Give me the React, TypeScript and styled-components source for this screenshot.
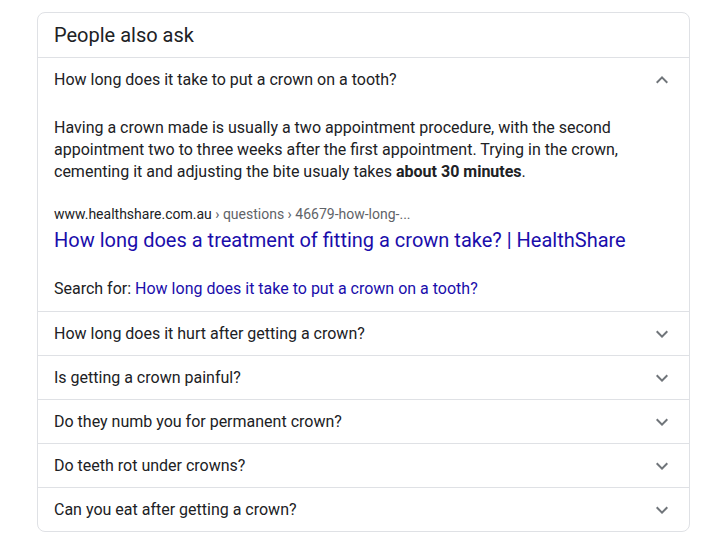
import React from "react";
import styled, { createGlobalStyle } from "styled-components";

const Global = createGlobalStyle`
  html, body { margin: 0; padding: 0; background: #fff; }
  body { font-family: Roboto, "Liberation Sans", Arial, sans-serif; color: #202124; }
`;

const Page = styled.div`
  padding: 12px 0 0 37px;
`;

const Card = styled.div`
  width: 653px;
  box-sizing: border-box;
  border: 1px solid #dfe1e5;
  border-radius: 8px;
  overflow: hidden;
`;

const Header = styled.div`
  padding: 9px 16px;
  font-size: 20px;
  line-height: 26px;
  color: #202124;
  border-bottom: 1px solid #dfe1e5;
`;

const Item = styled.div<{ $last?: boolean }>`
  border-bottom: ${(p) => (p.$last ? "none" : "1px solid #dfe1e5")};
`;

const Question = styled.div`
  height: 43px;
  display: flex;
  align-items: center;
  justify-content: space-between;
  padding: 0 15px 0 16px;
  font-size: 16px;
  color: #202124;
`;

const Chevron = styled.svg`
  width: 24px;
  height: 24px;
  fill: #70757a;
  flex: none;
`;

const Answer = styled.div`
  padding: 16px 16px 11px;
`;

const Snippet = styled.div`
  font-size: 16px;
  line-height: 22px;
  color: #202124;
  b { font-weight: 700; }
`;

const Cite = styled.div`
  margin-top: 20px;
  font-size: 14px;
  line-height: 22px;
  color: #202124;
  span { color: #5f6368; }
`;

const Title = styled.a`
  display: block;
  margin-top: 2px;
  font-size: 20px;
  line-height: 26px;
  color: #1a0dab;
  text-decoration: none;
`;

const SearchFor = styled.div`
  margin-top: 25px;
  font-size: 16px;
  line-height: 22px;
  color: #202124;
  a { color: #1a0dab; text-decoration: none; }
`;

const Icon = ({ up }: { up?: boolean }) => (
  <Chevron viewBox="0 0 24 24">
    {up ? (
      <path d="M7.41 15.41 12 10.83l4.59 4.58L18 14l-6-6-6 6z" />
    ) : (
      <path d="M7.41 8.59 12 13.17l4.59-4.58L18 10l-6 6-6-6z" />
    )}
  </Chevron>
);

const others = [
  "How long does it hurt after getting a crown?",
  "Is getting a crown painful?",
  "Do they numb you for permanent crown?",
  "Do teeth rot under crowns?",
  "Can you eat after getting a crown?",
];

export default function App() {
  return (
    <>
      <Global />
      <Page>
        <Card>
          <Header>People also ask</Header>
          <Item>
            <Question>
              How long does it take to put a crown on a tooth?
              <Icon up />
            </Question>
            <Answer>
              <Snippet>
                Having a crown made is usually a two appointment procedure, with the second
                appointment two to three weeks after the first appointment. Trying in the crown,
                cementing it and adjusting the bite usualy takes <b>about 30 minutes</b>.
              </Snippet>
              <Cite>
                www.healthshare.com.au <span>› questions › 46679-how-long-...</span>
              </Cite>
              <Title href="#">How long does a treatment of fitting a crown take? | HealthShare</Title>
              <SearchFor>
                Search for: <a href="#">How long does it take to put a crown on a tooth?</a>
              </SearchFor>
            </Answer>
          </Item>
          {others.map((q, i) => (
            <Item key={q} $last={i === others.length - 1}>
              <Question>
                {q}
                <Icon />
              </Question>
            </Item>
          ))}
        </Card>
      </Page>
    </>
  );
}
